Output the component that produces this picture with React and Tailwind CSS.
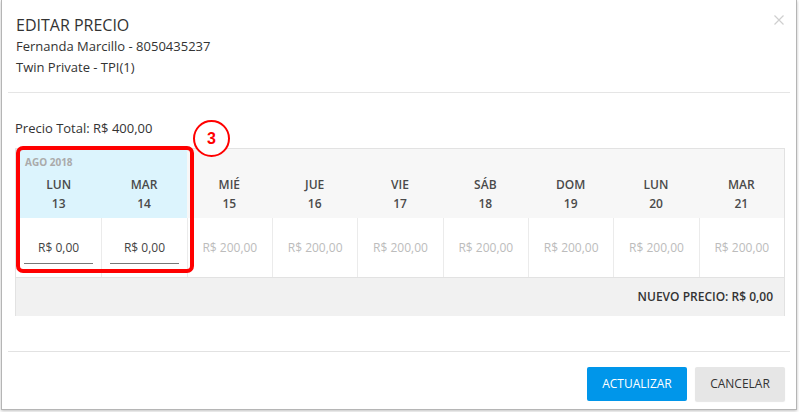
import React from "react";

const days = [
  { d: "LUN", n: "13", sel: true, price: "R$ 0,00" },
  { d: "MAR", n: "14", sel: true, price: "R$ 0,00" },
  { d: "MIÉ", n: "15", price: "R$ 200,00" },
  { d: "JUE", n: "16", price: "R$ 200,00" },
  { d: "VIE", n: "17", price: "R$ 200,00" },
  { d: "SÁB", n: "18", price: "R$ 200,00" },
  { d: "DOM", n: "19", price: "R$ 200,00" },
  { d: "LUN", n: "20", price: "R$ 200,00" },
  { d: "MAR", n: "21", price: "R$ 200,00" },
];

function App() {
  return (
    <div className="w-[799px] h-[412px] bg-white font-['Open_Sans',sans-serif]">
      <div className="relative w-[796px] h-[410px] ml-[1px] bg-white border-x border-b border-[#b5b5b5] shadow-[0_1px_3px_rgba(0,0,0,0.25)]">
        {/* encabezado */}
        <div className="relative px-[8px] pt-[14px] pb-[14px] mx-[6px] border-b border-[#e5e5e5]">
          <div className="text-[16px] leading-[22px] text-[#333]">EDITAR PRECIO</div>
          <div className="text-[13px] leading-[21px] text-[#333]">Fernanda Marcillo - 8050435237</div>
          <div className="text-[13px] leading-[21px] text-[#333]">Twin Private - TPI(1)</div>
          <svg className="absolute right-[6px] top-[15px]" width="10" height="10" viewBox="0 0 10 10">
            <path d="M0.5 0.5 L9.5 9.5 M9.5 0.5 L0.5 9.5" stroke="#cfcfcf" strokeWidth="1.2" fill="none" />
          </svg>
        </div>

        {/* contenido */}
        <div className="relative px-[13px] pt-[25px]">
          <div className="text-[13px] leading-[20px] text-[#333]">Precio Total: R$ 400,00</div>
          <div className="mt-[10px] w-[770px] border-t border-x border-[#e2e2e2]">
            <div className="grid grid-cols-9">
              {days.map((day, i) => (
                <div
                  key={i}
                  className={
                    day.sel
                      ? "h-[69px] bg-[#dcf4fd] flex flex-col items-center"
                      : "h-[69px] bg-[#f7f7f7] flex flex-col items-center"
                  }
                >
                  <div className="self-start pl-[9px] pt-[6px] h-[27px] text-[10px] leading-[14px] font-bold text-[#aaa]">
                    {i === 0 ? "AGO 2018" : ""}
                  </div>
                  <div className="text-[12px] leading-[18px] font-semibold text-[#4a4a4a]">{day.d}</div>
                  <div className="text-[12px] leading-[20px] font-semibold text-[#4a4a4a]">{day.n}</div>
                </div>
              ))}
            </div>
            <div className="grid grid-cols-9 border-b border-[#e2e2e2]">
              {days.map((day, i) => (
                <div
                  key={i}
                  className={
                    i === 0
                      ? "h-[59px] bg-white flex items-center justify-center"
                      : "h-[59px] bg-white border-l border-[#ebebeb] flex items-center justify-center"
                  }
                >
                  {day.sel ? (
                    <div className="mt-[2px] w-[69px] h-[30px] border-b border-[#777] flex items-center justify-center text-[12px] text-[#444]">
                      {day.price}
                    </div>
                  ) : (
                    <div className="text-[12px] text-[#bcbcbc]">{day.price}</div>
                  )}
                </div>
              ))}
            </div>
            <div className="h-[38px] bg-[#f1f1f1] flex items-center justify-end pr-[11px] text-[12px] font-semibold text-[#333]">
              NUEVO PRECIO: R$ 0,00
            </div>
          </div>

          {/* marca roja */}
          <div className="absolute left-[14px] top-[53px] w-[178px] h-[127px] border-[4px] border-[#ff0000] rounded-[7px]"></div>
          <div className="absolute left-[191px] top-[27px] w-[37px] h-[37px] bg-white border-[2px] border-[#ff0000] rounded-full flex items-center justify-center text-[16px] font-bold text-[#ff0000] font-['Liberation_Sans',sans-serif]">
            3
          </div>
        </div>

        {/* pie */}
        <div className="mt-[35px] mx-[6px] border-t border-[#e2e2e2] flex justify-end gap-[8px] pt-[15px] pr-[5px]">
          <div className="w-[100px] h-[34px] bg-[#0096ea] rounded-[2px] flex items-center justify-center text-[12px] text-white">
            ACTUALIZAR
          </div>
          <div className="w-[90px] h-[34px] bg-[#e6e6e6] rounded-[2px] shadow-[0_1px_1px_rgba(0,0,0,0.1)] flex items-center justify-center text-[12px] text-[#333]">
            CANCELAR
          </div>
        </div>
      </div>
    </div>
  );
}

export default App;
